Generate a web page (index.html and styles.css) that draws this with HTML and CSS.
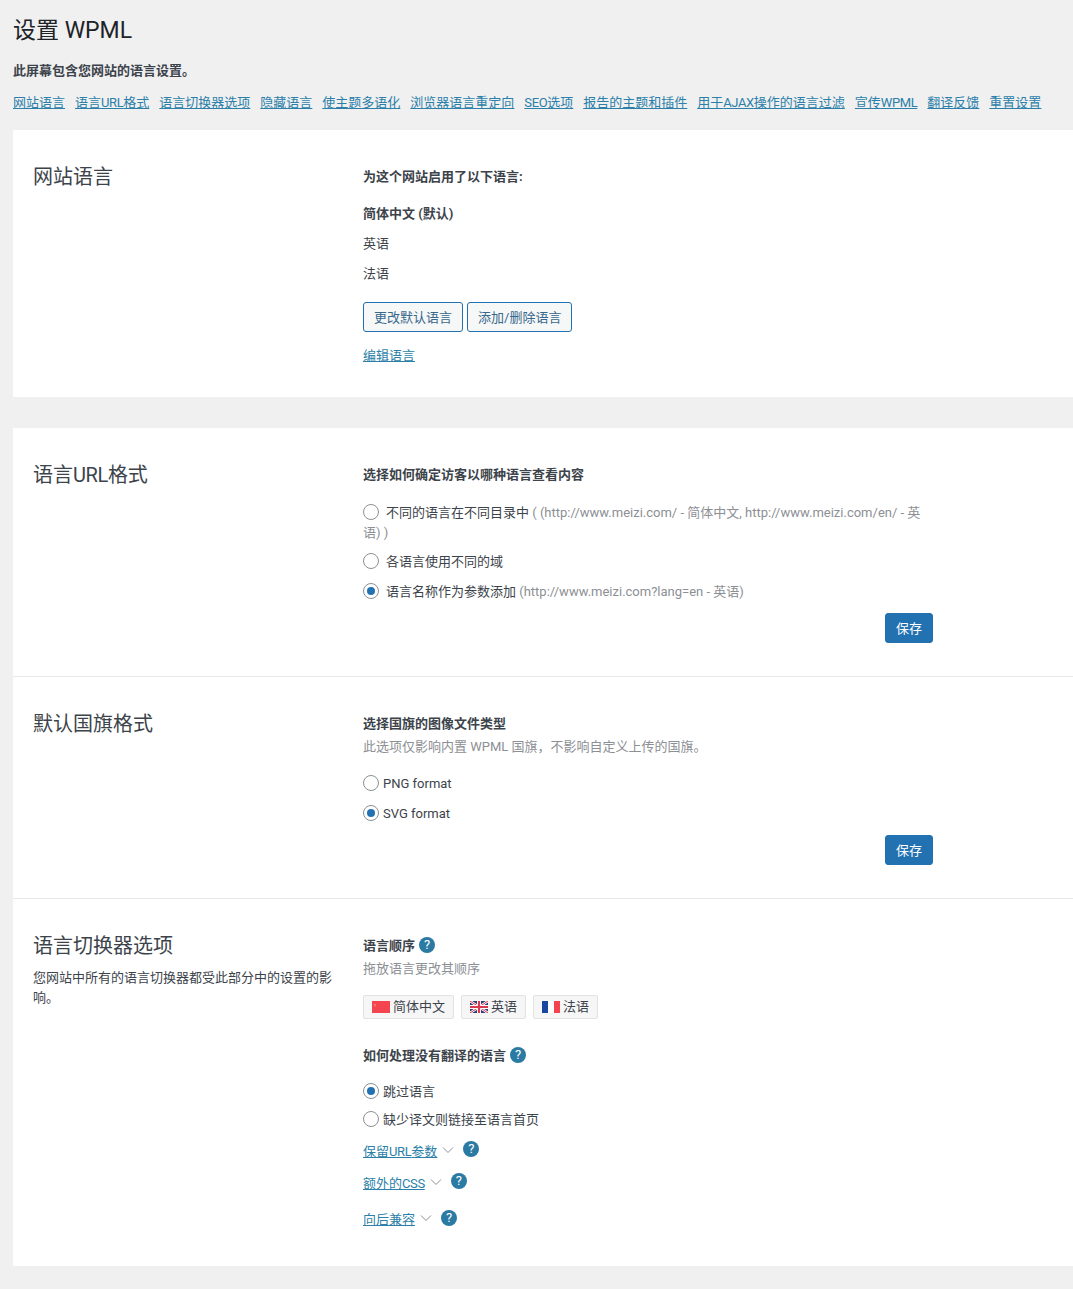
FILE: index.html
```html
<!DOCTYPE html>
<html lang="zh-CN">
<head>
<meta charset="utf-8">
<title>设置 WPML</title>
<link rel="stylesheet" href="styles.css">
</head>
<body>
<main class="wrap">
  <h1 class="page-title">设置 WPML</h1>
  <p class="page-desc">此屏幕包含您网站的语言设置。</p>
  <nav class="nav">
    <a href="#">网站语言</a><a href="#">语言<span class="latin">URL</span>格式</a><a href="#">语言切换器选项</a><a href="#">隐藏语言</a><a href="#">使主题多语化</a><a href="#">浏览器语言重定向</a><a href="#"><span class="latin">SEO</span>选项</a><a href="#">报告的主题和插件</a><a href="#">用于<span class="latin">AJAX</span>操作的语言过滤</a><a href="#">宣传<span class="latin">WPML</span></a><a href="#">翻译反馈</a><a href="#">重置设置</a>
  </nav>

  <section class="card card-languages">
    <div class="row row-first">
      <div class="side"><h2 class="side-title">网站语言</h2></div>
      <div class="main">
        <h3 class="heading">为这个网站启用了以下语言:</h3>
        <ul class="lang-list">
          <li class="lang-default">简体中文 (默认)</li>
          <li>英语</li>
          <li>法语</li>
        </ul>
        <div class="btn-row">
          <button class="btn btn-secondary">更改默认语言</button>
          <button class="btn btn-secondary">添加/删除语言</button>
        </div>
        <a class="edit-link" href="#">编辑语言</a>
      </div>
    </div>
  </section>

  <section class="card">
    <div class="row row-url">
      <div class="side"><h2 class="side-title">语言<span class="latin">URL</span>格式</h2></div>
      <div class="main">
        <h3 class="heading heading-offset heading-url">选择如何确定访客以哪种语言查看内容</h3>
        <label class="radio-block"><input class="radio" type="radio" name="url"><span class="radio-text">不同的语言在不同目录中</span> <span class="muted">( (http://www.meizi.com/ - 简体中文, http://www.meizi.com/en/ - 英语) )</span></label>
        <label class="radio-block"><input class="radio" type="radio" name="url"><span class="radio-text">各语言使用不同的域</span></label>
        <label class="radio-block radio-block-last"><input class="radio" type="radio" name="url" checked><span class="radio-text">语言名称作为参数添加</span> <span class="muted">(http://www.meizi.com?lang=en - 英语)</span></label>
        <div class="save-row"><button class="btn btn-primary">保存</button></div>
      </div>
    </div>

    <div class="row row-flag">
      <div class="side"><h2 class="side-title">默认国旗格式</h2></div>
      <div class="main">
        <h3 class="heading heading-offset">选择国旗的图像文件类型</h3>
        <p class="muted line">此选项仅影响内置 WPML 国旗，不影响自定义上传的国旗。</p>
        <div class="radio-list radio-list-flag">
          <label class="radio-line"><input class="radio" type="radio" name="flag">PNG format</label>
          <label class="radio-line"><input class="radio" type="radio" name="flag" checked>SVG format</label>
        </div>
        <div class="save-row"><button class="btn btn-primary">保存</button></div>
      </div>
    </div>

    <div class="row row-switcher">
      <div class="side">
        <h2 class="side-title">语言切换器选项</h2>
        <p class="side-desc">您网站中所有的语言切换器都受此部分中的设置的影响。</p>
      </div>
      <div class="main">
        <h3 class="heading heading-help">语言顺序<span class="help">?</span></h3>
        <p class="muted line line-order">拖放语言更改其顺序</p>
        <div class="chips">
          <span class="chip"><svg class="flag" viewBox="0 0 18 12" aria-hidden="true"><rect width="18" height="12" fill="#f4444f"/><path d="M3 2.2l.5 1.3 1.3.1-1 .8.3 1.3-1.1-.7-1.1.7.3-1.3-1-.8 1.3-.1z" fill="#f77f6a"/></svg>简体中文</span>
          <span class="chip"><svg class="flag" viewBox="0 0 18 12" aria-hidden="true"><rect width="18" height="12" fill="#2c3f78"/><path d="M0 0l18 12M18 0L0 12" stroke="#fff" stroke-width="2.4"/><path d="M0 0l18 12M18 0L0 12" stroke="#d8394f" stroke-width="1"/><path d="M9 0v12M0 6h18" stroke="#fff" stroke-width="4"/><path d="M9 0v12M0 6h18" stroke="#d8394f" stroke-width="2.2"/></svg>英语</span>
          <span class="chip"><svg class="flag" viewBox="0 0 18 12" aria-hidden="true"><rect width="6" height="12" fill="#17479e"/><rect x="6" width="6" height="12" fill="#fff"/><rect x="12" width="6" height="12" fill="#f4444f"/></svg>法语</span>
        </div>
        <h3 class="heading heading-help heading-missing">如何处理没有翻译的语言<span class="help">?</span></h3>
        <div class="radio-list radio-list-missing">
          <label class="radio-line"><input class="radio" type="radio" name="missing" checked>跳过语言</label>
          <label class="radio-line"><input class="radio" type="radio" name="missing">缺少译文则链接至语言首页</label>
        </div>
        <div class="toggle toggle-params"><a href="#">保留<span class="latin">URL</span>参数</a><svg class="chevron" viewBox="0 0 12 8" aria-hidden="true"><path d="M1 1.5l5 5 5-5"/></svg><span class="help">?</span></div>
        <div class="toggle toggle-css"><a href="#">额外的<span class="latin">CSS</span></a><svg class="chevron" viewBox="0 0 12 8" aria-hidden="true"><path d="M1 1.5l5 5 5-5"/></svg><span class="help">?</span></div>
        <div class="toggle toggle-compat"><a href="#">向后兼容</a><svg class="chevron" viewBox="0 0 12 8" aria-hidden="true"><path d="M1 1.5l5 5 5-5"/></svg><span class="help">?</span></div>
      </div>
    </div>
  </section>
</main>
</body>
</html>
```
FILE: styles.css
```css
* { box-sizing: border-box; }
html, body { margin: 0; padding: 0; }
body {
  background: #f0f0f1;
  color: #3c434a;
  font-family: Roboto, "Noto Sans CJK SC", sans-serif;
  font-size: 13px;
  line-height: 20px;
  overflow-x: hidden;
  min-height: 1289px;
}
a { color: #2b7fa8; text-decoration: underline; }
p, h1, h2, h3, ul { margin: 0; padding: 0; }
.latin { letter-spacing: -.4px; }
.wrap { padding: 0 0 23px 13px; }
.page-title {
  font-size: 23px;
  font-weight: 400;
  line-height: 30px;
  color: #1d2327;
  padding-top: 16px;
}
.page-desc { font-weight: 700; margin-top: 15px; color: #3c434a; }
.nav { display: flex; gap: 10px; margin-top: 12px; white-space: nowrap; }
.card { background: #fff; margin-bottom: 31px; }
.card-languages { margin-top: 17px; }
.row { display: flex; padding: 31px 0 0 20px; }
.row + .row { border-top: 1px solid #e8e8ea; }
.side { width: 330px; flex: none; padding-right: 30px; }
.side-title { font-size: 20px; font-weight: 400; line-height: 32px; color: #3c434a; }
.side-desc { margin-top: 6px; }
.main { width: 570px; flex: none; padding-top: 6px; }
.heading { font-size: 13px; font-weight: 700; line-height: 20px; color: #3c434a; }
.heading-offset { margin-top: 0; }
.lang-list { list-style: none; margin-top: 12px; }
.lang-list li { line-height: 30px; }
.lang-default { font-weight: 700; }
.btn-row { display: flex; gap: 4px; margin-top: 13px; }
.btn {
  height: 30px;
  padding: 1px 10px 0;
  border-radius: 3px;
  font: inherit;
  line-height: 28px;
}
.btn-secondary { background: #f6f7f7; border: 1px solid #2271b1; color: #38688c; }
.btn-primary { background: #2271b1; border: 1px solid #2271b1; color: #fff; }
.edit-link { display: block; margin-top: 14px; width: max-content; }
.row-first { padding-bottom: 31px; }
.heading-url { margin-bottom: 18px; }
.radio {
  appearance: none;
  width: 16px;
  height: 16px;
  margin: 1px 7px 0 0;
  border: 1px solid #8c8f94;
  border-radius: 50%;
  background: #fff;
  vertical-align: top;
  display: inline-grid;
  place-content: center;
}
.radio:checked::before {
  content: "";
  width: 8px;
  height: 8px;
  border-radius: 50%;
  background: #2271b1;
}
.radio-block { display: block; margin-bottom: 9px; }
.radio-block-last { margin-top: 10px; margin-bottom: 0; }
.muted { color: #8c8f94; }
.line { line-height: 20px; margin-top: 3px; }
.save-row { display: flex; justify-content: flex-end; margin-top: 11px; }
.row-url { padding-bottom: 33px; }
.row-flag { padding-bottom: 33px; }
.radio-list-flag { margin-top: 17px; display: flex; flex-direction: column; gap: 10px; }
.radio-line { display: flex; align-items: center; height: 20px; }
.radio-line .radio { margin: 0 4px 2px 0; }
.chips { display: flex; gap: 7px; margin-top: 16px; }
.chip {
  display: flex;
  align-items: center;
  height: 24px;
  padding: 0 8px;
  background: #f6f6f7;
  border: 1px solid #e2e2e4;
  border-radius: 2px;
}
.flag { width: 18px; height: 12px; margin-right: 3px; flex: none; }
.heading-help { display: flex; align-items: center; }
.heading-help .help { margin-bottom: 2px; }
.heading-missing { margin-top: 27px; }
.help {
  display: inline-flex;
  align-items: center;
  justify-content: center;
  width: 16px;
  height: 16px;
  margin-left: 4px;
  border-radius: 50%;
  background: #2a7aa3;
  color: #fff;
  font-size: 13px;
  font-weight: 400;
  line-height: 16px;
  flex: none;
}
.radio-list-missing { margin-top: 16px; display: flex; flex-direction: column; gap: 8px; }
.toggle { display: flex; align-items: center; height: 20px; }
.toggle-params { margin-top: 12px; }
.toggle-css { margin-top: 12px; }
.toggle-compat { margin-top: 16px; }
.toggle .help { margin-left: 9px; margin-bottom: 6px; }
.toggle-compat .help { margin-bottom: 4px; }
.chevron {
  width: 12px;
  height: 8px;
  margin-left: 5px;
  margin-bottom: 4px;
  fill: none;
  stroke: #8c8f94;
  stroke-width: 1;
  flex: none;
}
.row-switcher { padding-bottom: 36px; }
```
